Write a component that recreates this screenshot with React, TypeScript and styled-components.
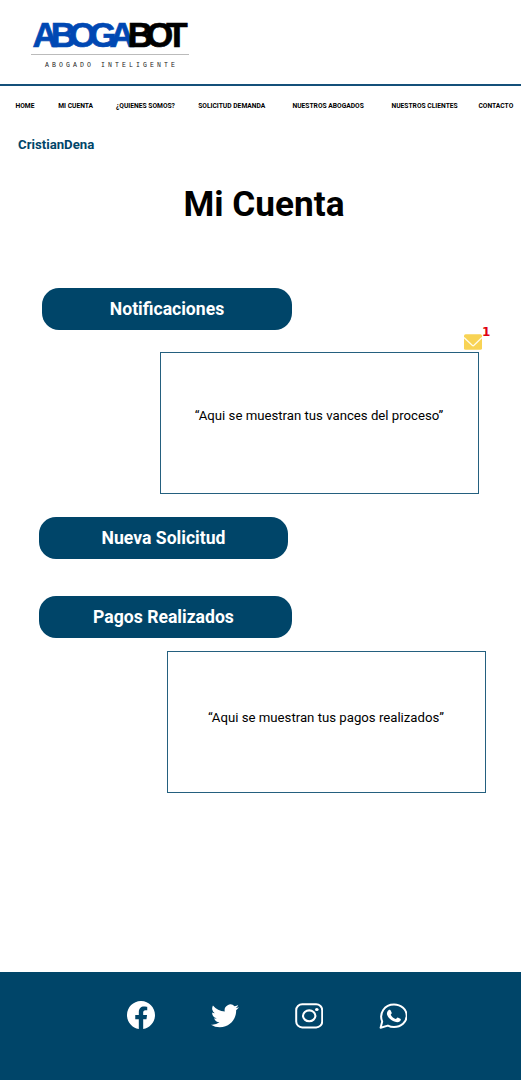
import React from 'react';
import styled, { createGlobalStyle } from 'styled-components';
import { BsFacebook, BsTwitter } from 'react-icons/bs';

const navy = '#004569';

const GlobalStyle = createGlobalStyle`
  * { box-sizing: border-box; }
  body { margin: 0; background: #fff; font-family: Roboto, "Liberation Sans", sans-serif; }
`;

const Page = styled.div`
  width: 521px;
  height: 1080px;
  display: flex;
  flex-direction: column;
  overflow: hidden;
`;

const Header = styled.header`
  height: 86px;
  padding: 14px 0 0 31px;
  border-bottom: 2px solid #14507a;
`;

const Brand = styled.div`
  width: 158px;
  display: flex;
  flex-direction: column;
`;

const Wordmark = styled.div`
  height: 40px;
  padding-left: 1.5px;
  font: 700 35px/41px "Liberation Sans", Arial, sans-serif;
  letter-spacing: -7px;
  -webkit-text-stroke: 0.7px currentColor;
  white-space: nowrap;
  color: #000;
`;

const Accent = styled.span`
  color: #0048b3;
`;

const Tagline = styled.div`
  border-top: 1px solid #bbb;
  padding: 6px 0 0 14px;
  font: 400 6.5px/9px "Liberation Mono", monospace;
  letter-spacing: 3.1px;
  white-space: nowrap;
  color: #222;
`;

const Nav = styled.nav`
  display: grid;
  grid-template-columns: 42.7px 57.8px 82.2px 94.3px 99px 87px 42px;
  height: 40px;
  padding-left: 15.5px;
  align-items: center;
`;

const NavLink = styled.a`
  font-size: 6.7px;
  font-weight: 700;
  line-height: 8px;
  white-space: nowrap;
  color: #000;
`;

const Main = styled.main`
  flex: 1;
  display: flex;
  flex-direction: column;
  align-items: flex-start;
`;

const User = styled.div`
  margin: 11px 0 0 18px;
  font-size: 13.2px;
  font-weight: 700;
  line-height: 16px;
  color: ${navy};
`;

const Title = styled.h1`
  align-self: center;
  margin: 30px 0 0 7px;
  font-size: 35.2px;
  font-weight: 700;
  line-height: 42px;
  color: #000;
`;

const PillButton = styled.button<{ $width: number; $left: number; $top: number; $shift?: number }>`
  width: ${p => p.$width}px;
  height: 42px;
  flex: none;
  margin: ${p => p.$top}px 0 0 ${p => p.$left}px;
  padding: 0 ${p => p.$shift ?? 0}px 0 0;
  border: 0;
  border-radius: 17px;
  background: ${navy};
  color: #fff;
  font: 700 17.6px/42px Roboto, sans-serif;
`;

const Panel = styled.section<{ $left: number; $top: number; $inset: number }>`
  position: relative;
  width: 319px;
  height: 142px;
  flex: none;
  margin: ${p => p.$top}px 0 0 ${p => p.$left}px;
  padding: ${p => p.$inset}px 1px 0 0;
  border: 1px solid #24607f;
  text-align: center;
  font-size: 13.2px;
  line-height: 18px;
  white-space: nowrap;
  color: #000;
`;

const Mail = styled.div`
  position: absolute;
  left: 303px;
  top: -20px;
  width: 19px;
  height: 17px;
  svg { display: block; }
`;

const Count = styled.span`
  position: absolute;
  left: 18px;
  top: -8px;
  font: 700 12px/14px "DejaVu Sans", sans-serif;
  color: #e0000f;
`;

const Footer = styled.footer`
  height: 108px;
  flex: none;
  display: flex;
  gap: 56px;
  padding: 29px 0 0 127px;
  background: ${navy};
  color: #fff;
  svg { display: block; width: 28px; height: 28px; }
`;

const links = ['HOME', 'MI CUENTA', '¿QUIENES SOMOS?', 'SOLICITUD DEMANDA', 'NUESTROS ABOGADOS', 'NUESTROS CLIENTES', 'CONTACTO'];

export default function App() {
  return (
    <Page>
      <GlobalStyle />
      <Header>
        <Brand>
          <Wordmark><Accent>ABOGA</Accent>BOT</Wordmark>
          <Tagline>ABOGADO INTELIGENTE</Tagline>
        </Brand>
      </Header>
      <Nav>
        {links.map(l => <NavLink key={l}>{l}</NavLink>)}
      </Nav>
      <Main>
        <User>CristianDena</User>
        <Title>Mi Cuenta</Title>
        <PillButton $width={250} $left={42} $top={63}>Notificaciones</PillButton>
        <Panel $left={160} $top={22} $inset={54}>
          “Aqui se muestran tus vances del proceso”
          <Mail>
            <svg width="19" height="17" viewBox="0 0 19 17">
              <rect x="0" y="1.3" width="18" height="15.5" rx="1.6" fill="#f8d354" />
              <path d="M0 4.5 8.2 12.3q.9.8 1.8 0L18 4.5" fill="none" stroke="#fffbe8" strokeWidth="1.3" />
            </svg>
            <Count>1</Count>
          </Mail>
        </Panel>
        <PillButton $width={249} $left={39} $top={23}>Nueva Solicitud</PillButton>
        <PillButton $width={253} $left={39} $top={37} $shift={4}>Pagos Realizados</PillButton>
        <Panel $left={167} $top={13} $inset={57}>“Aqui se muestran tus pagos realizados”</Panel>
      </Main>
      <Footer>
        <BsFacebook />
        <BsTwitter />
        <svg viewBox="0 0 28 28" fill="none" stroke="currentColor">
          <rect x="1.2" y="3.2" width="26" height="23.2" rx="6" strokeWidth="2" />
          <ellipse cx="14.2" cy="14.8" rx="6.2" ry="5.4" strokeWidth="2.1" />
          <ellipse cx="21.8" cy="8.4" rx="1.8" ry="1.5" fill="currentColor" stroke="none" />
        </svg>
        <svg viewBox="0 0 28 28" fill="none" stroke="currentColor" strokeWidth="2" strokeLinejoin="round">
          <path d="M1.6 26.8 3.2 20.6C-.2 12.5 5.4 3.5 15 3.5c7.2 0 12.7 5 12.7 11.2 0 6.3-5.6 11.3-12.7 11.3-2.3 0-4.3-.5-6.1-1.400Z" />
          <path d="M9.5 9.2c1-.9 2-.4 2.4.7l.8 1.9c.3.8-.9 1.600-1 2 .9 2 2.700 3.400 5.100 4.200.6-.1 1.300-1.600 2-1.400l2.500 1.100c1 .5.3 2-.3 2.600-1.900 1.500-4.600 1-7-.2-2.900-1.500-5.300-4-6-6.600-.3-1.800.3-3.300 1.500-4.300Z" fill="currentColor" stroke="none" />
        </svg>
      </Footer>
    </Page>
  );
}
